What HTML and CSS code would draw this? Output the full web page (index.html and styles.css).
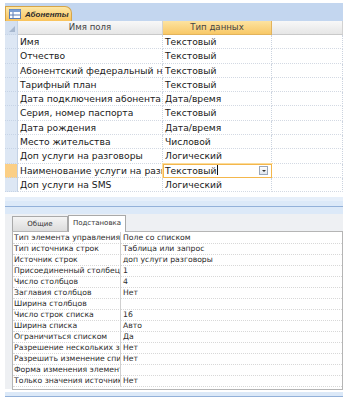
FILE: index.html
```html
<!DOCTYPE html>
<html lang="ru">
<head>
  <meta charset="UTF-8" />
  <title>Абоненты - конструктор</title>
  <link rel="stylesheet" href="styles.css">
</head>
<body>
  <div class="window">
    <div class="tabbar">
      <div class="doc-tab">
        <svg class="tab-icon" width="12" height="10" viewBox="0 0 12 10">
          <rect x="0.5" y="0.5" width="11" height="9" fill="#fff" stroke="#5a7db5"/>
          <rect x="0.5" y="0.5" width="11" height="2.5" fill="#7c9fd4"/>
          <line x1="4" y1="3" x2="4" y2="9.5" stroke="#5a7db5"/>
          <line x1="0.5" y1="6" x2="11.5" y2="6" stroke="#5a7db5"/>
        </svg>
        <span>Абоненты</span>
      </div>
    </div>

    <div class="design">
      <div class="sel head"><span class="corner"></span></div>
      <div class="hcell">Имя поля</div>
      <div class="hcell active">Тип данных</div>
      <div class="hcell"></div>
    </div>
    <div class="design rows" id="rows"></div>
    <div class="splitter"></div>

    <div class="props-panel">
      <div class="ptabs">
        <div class="ptab">Общие</div>
        <div class="ptab current">Подстановка</div>
      </div>
      <div class="props" id="props"></div>
    </div>
    <div class="bottom-line"></div>
  </div>

  <script>
    const fields = [
      ['Имя', 'Текстовый'],
      ['Отчество', 'Текстовый'],
      ['Абонентский федеральный номер', 'Текстовый'],
      ['Тарифный план', 'Текстовый'],
      ['Дата подключения абонента', 'Дата/время'],
      ['Серия, номер паспорта', 'Текстовый'],
      ['Дата рождения', 'Дата/время'],
      ['Место жительства', 'Числовой'],
      ['Доп услуги на разговоры', 'Логический'],
      ['Наименование услуги на разговоры', 'Текстовый'],
      ['Доп услуги на SMS', 'Логический']
    ];

    const props = [
      ['Тип элемента управления', 'Поле со списком'],
      ['Тип источника строк', 'Таблица или запрос'],
      ['Источник строк', 'доп услуги разговоры'],
      ['Присоединенный столбец', '1'],
      ['Число столбцов', '4'],
      ['Заглавия столбцов', 'Нет'],
      ['Ширина столбцов', ''],
      ['Число строк списка', '16'],
      ['Ширина списка', 'Авто'],
      ['Ограничиться списком', 'Да'],
      ['Разрешение нескольких значений', 'Нет'],
      ['Разрешить изменение списка значений', 'Нет'],
      ['Форма изменения элементов списка', ''],
      ['Только значения источника строк', 'Нет']
    ];

    const rowsEl = document.getElementById('rows');
    fields.forEach((f, i) => {
      const editing = i === 9;
      rowsEl.insertAdjacentHTML('beforeend',
        '<div class="sel' + (editing ? ' current' : '') + '"></div>' +
        '<div class="cell">' + f[0] + '</div>' +
        (editing
          ? '<div class="cell edit"><span>' + f[1] + '<i class="caret"></i></span><b class="drop"></b></div>'
          : '<div class="cell">' + f[1] + '</div>') +
        '<div class="cell"></div>');
    });

    const propsEl = document.getElementById('props');
    props.forEach(p => {
      propsEl.insertAdjacentHTML('beforeend',
        '<div class="plabel">' + p[0] + '</div><div class="pvalue">' + p[1] + '</div>');
    });
  </script>
</body>
</html>
```

FILE: styles.css
```css
body {
  margin: 0;
  background-color: #ffffff;
  font-family: "DejaVu Sans", "Liberation Sans", sans-serif;
  color: #1a1a1a;
}

.window {
  width: 351px;
  height: 406px;
  padding: 3px 8px 0 5px;
  box-sizing: border-box;
  display: flex;
  flex-direction: column;
}

.tabbar {
  height: 18px;
  background-color: #c3d6ef;
  display: flex;
  align-items: flex-end;
}

.doc-tab {
  width: 62px;
  height: 14px;
  padding-left: 3px;
  display: flex;
  align-items: center;
  gap: 4px;
  background: linear-gradient(#fde7a6, #f9c35c);
  border: 1px solid #d6a548;
  border-bottom: none;
  border-radius: 0 7px 0 0;
  font-family: "Liberation Sans", sans-serif;
  font-size: 8px;
  font-weight: bold;
  font-style: italic;
  color: #2a2a2a;
}

.design {
  display: grid;
  grid-template-columns: 13px 145px 109px 71px;
}

.sel {
  background-color: #dde7f4;
  border-bottom: 1px dotted #c7d4e6;
  border-right: 1px solid #c4d2e5;
  box-sizing: border-box;
  height: 14.3px;
}

.sel.head {
  height: 14px;
  position: relative;
  background-color: #d4e0f0;
}

.sel.current {
  background-color: #fbcf86;
}

.corner {
  position: absolute;
  right: 2px;
  bottom: 2px;
  width: 0;
  height: 0;
  border-left: 6px solid transparent;
  border-bottom: 6px solid #a7b8cf;
}

.hcell {
  height: 14px;
  box-sizing: border-box;
  background: linear-gradient(#f8f8f8, #e6e6e6);
  border-right: 1px solid #d2d2d2;
  border-bottom: 1px solid #c9c9c9;
  font-size: 8.6px;
  color: #444;
  text-align: center;
  line-height: 13px;
}

.hcell.active {
  background: linear-gradient(#fde3a0, #f8c867);
  border-color: #e2b35c;
}

.cell {
  height: 14.3px;
  box-sizing: border-box;
  padding-left: 2px;
  font-size: 9.2px;
  line-height: 13px;
  white-space: nowrap;
  overflow: hidden;
  border-right: 1px dotted #cbd3df;
  border-bottom: 1px dotted #d3d9e3;
  background-color: #ffffff;
}

.cell.edit {
  display: flex;
  justify-content: space-between;
  align-items: center;
  padding: 0 3px 0 1px;
  border: 1px solid #f4b74c;
  box-shadow: 0 0 0 1px #fbdc9c;
}

.caret {
  display: inline-block;
  width: 1px;
  height: 10px;
  margin-left: 1px;
  vertical-align: -1px;
  background-color: #111;
}

.drop {
  width: 9px;
  height: 9px;
  box-sizing: border-box;
  border: 1px solid #9aa6b8;
  background: linear-gradient(#ffffff, #dfe5ee);
  position: relative;
}

.drop::after {
  content: "";
  position: absolute;
  left: 2px;
  top: 3px;
  border-left: 2px solid transparent;
  border-right: 2px solid transparent;
  border-top: 2px solid #333;
}

.splitter {
  height: 13px;
  margin-top: 5px;
  background-color: #dce9f8;
  border-top: 4px solid #e6effa;
  position: relative;
}

.splitter::after {
  content: "";
  position: absolute;
  left: 0;
  right: 0;
  top: 5px;
  height: 1px;
  background-color: #93b1d9;
}

.props-panel {
  height: 175px;
  background-color: #eef0f3;
  padding: 1px 0 0 7px;
  box-sizing: border-box;
  display: flex;
  flex-direction: column;
}

.ptabs {
  display: flex;
  height: 16px;
  align-items: flex-end;
}

.ptab {
  width: 56px;
  height: 15px;
  box-sizing: border-box;
  background: linear-gradient(#f4f4f4, #dcdcdc);
  border: 1px solid #a9a9a9;
  border-bottom: none;
  font-size: 7px;
  text-align: center;
  line-height: 14px;
  color: #333;
  white-space: nowrap;
}

.ptab.current {
  width: 58px;
  height: 17px;
  margin-bottom: -1px;
  background: #ffffff;
  position: relative;
  z-index: 1;
}

.props {
  display: grid;
  grid-template-columns: 108px 1fr;
  background-color: #ffffff;
  border: 1px solid #b5b5b5;
  padding: 0 0 3px;
}

.plabel,
.pvalue {
  height: 11px;
  font-size: 7.7px;
  line-height: 11px;
  white-space: nowrap;
  overflow: hidden;
  border-bottom: 1px dotted #d8d8d8;
  color: #2b2b2b;
  margin-bottom: -1px;
}

.plabel {
  padding-left: 1px;
  border-right: 1px solid #d0d0d0;
}

.pvalue {
  padding-left: 2px;
}

.bottom-line {
  height: 4px;
  margin-top: 3px;
  background-color: #dce9f8;
  border-bottom: 1px solid #93b1d9;
}
```
